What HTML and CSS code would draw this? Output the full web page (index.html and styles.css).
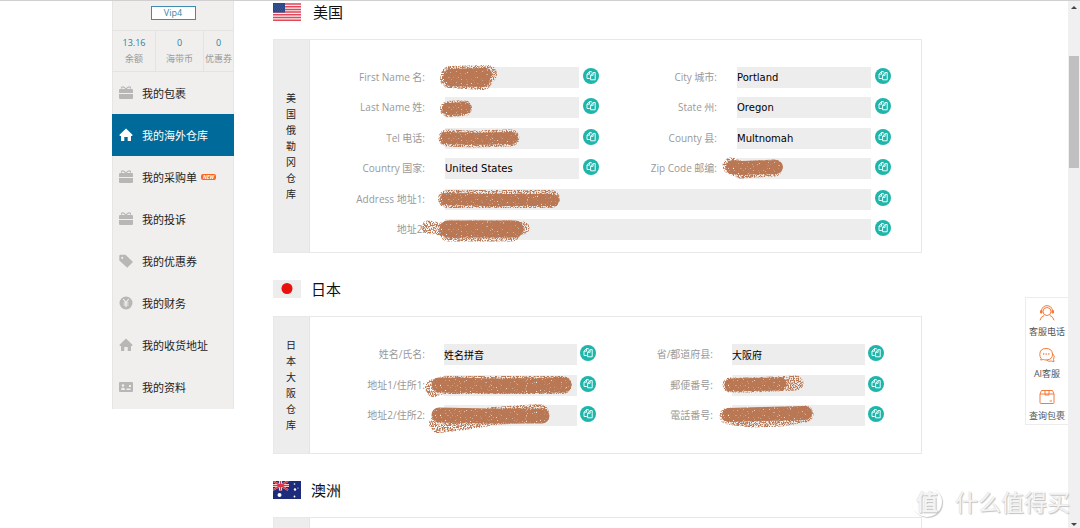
FILE: index.html
```html
<!DOCTYPE html>
<html lang="zh-CN">
<head>
<meta charset="utf-8">
<title>我的海外仓库</title>
<link rel="stylesheet" href="styles.css">
</head>
<body>
<svg class="defs" aria-hidden="true">
  <defs>
    <filter id="loose" filterUnits="userSpaceOnUse" x="-50" y="-20" width="280" height="60">
      <feTurbulence type="fractalNoise" baseFrequency="0.8" numOctaves="2" seed="4"/>
      <feColorMatrix values="0 0 0 0 0  0 0 0 0 0  0 0 0 0 0  6 0 0 0 -2.5"/>
      <feComposite in="SourceGraphic" operator="in"/>
    </filter>
    <filter id="dense" filterUnits="userSpaceOnUse" x="-50" y="-20" width="280" height="60">
      <feTurbulence type="fractalNoise" baseFrequency="0.8" numOctaves="2" seed="9"/>
      <feColorMatrix values="0 0 0 0 0  0 0 0 0 0  0 0 0 0 0  6 0 0 0 -1.3"/>
      <feComposite in="SourceGraphic" operator="in"/>
    </filter>
    <symbol id="copy" viewBox="0 0 16 16">
      <path d="M8.300 4.500V3.500H6.600L4 6.200v4.300h2.800M6.600 3.500v2.700H4M12.200 4.500v7.300H7.600V7.300l2.500-2.800zM10.100 4.500v2.800H7.600" fill="none" stroke="#e9fffc" stroke-width="1" stroke-linejoin="round"/>
    </symbol>
    <symbol id="gift" viewBox="0 0 14 14">
      <path d="M1 3h12q1 0 1 1v3H0V4q0-1 1-1zM0 8h14v4q0 1-1 1H1q-1 0-1-1z"/>
      <path d="M7 3.200C5 0 2 .2 2.600 2.600M7 3.200C9 0 12 .2 11.400 2.600" fill="none" stroke="currentColor" stroke-width="1.200"/>
    </symbol>
    <symbol id="home" viewBox="0 0 14 14">
      <path d="M7 .5 13.700 7l-.7.9h-1V13H8.700V9H5.300v4H2V7.900H1L.3 7z"/>
    </symbol>
    <symbol id="tag" viewBox="0 0 14 14">
      <path fill-rule="evenodd" d="M.3 2q0-1.200 1.200-1.200h5L14 8 8.200 13.700.3 6.500zM3.200 2.700a1.100 1.100 0 1 0 .01 0z"/>
    </symbol>
    <symbol id="coin" viewBox="0 0 14 14">
      <circle cx="7" cy="7" r="6.500"/>
      <path d="M4.300 3 7 6.500 9.700 3M7 6.500V11M4.500 7h5M4.500 9h5" fill="none" stroke="#f0efed" stroke-width="1.200"/>
    </symbol>
    <symbol id="card" viewBox="0 0 14 14">
      <rect y="2" width="14" height="10" rx="1"/>
      <path d="M2 10q0-2.500 2-2.500T6 10zM2.700 5.500a1.300 1.300 0 1 1 2.600 0 1.300 1.300 0 0 1-2.600 0M7.500 8.500h4V10h-4zM10 5h2v2h-2z" fill="#f0efed"/>
    </symbol>
  </defs>
</svg>
<div class="shell">
  <div class="page">
    <aside class="sidebar">
      <div class="level"><a class="vip" href="#">Vip4</a></div>
      <div class="stats">
        <div class="stat"><b>13.16</b><span>余额</span></div>
        <div class="stat wide"><b>0</b><span>海带币</span></div>
        <div class="stat"><b>0</b><span>优惠券</span></div>
      </div>
      <nav class="menu">
        <a href="#"><svg><use href="#gift"/></svg>我的包裹</a>
        <a href="#" class="active"><svg><use href="#home"/></svg>我的海外仓库</a>
        <a href="#"><svg><use href="#gift"/></svg>我的采购单<em class="new">NEW</em></a>
        <a href="#"><svg><use href="#gift"/></svg>我的投诉</a>
        <a href="#"><svg><use href="#tag"/></svg>我的优惠券</a>
        <a href="#"><svg><use href="#coin"/></svg>我的财务</a>
        <a href="#"><svg><use href="#home"/></svg>我的收货地址</a>
        <a href="#"><svg><use href="#card"/></svg>我的资料</a>
      </nav>
    </aside>
    <main class="main">
      <h2 class="country first">
        <svg class="flag" viewBox="0 0 28 18"><path fill="#fbeef0" d="M0 0h28v18H0z"/><path d="M0 1h28M0 3.700h28M0 6.400h28M0 9.100h28M0 11.800h28M0 14.500h28M0 17.200h28" stroke="#e0485c" stroke-width="1.500"/><path fill="#2a4788" d="M0 0h12v9.500H0z"/><path d="M1 2h10M2 4h9M1 6h10M2 8h9" stroke="#5670a8" stroke-width=".6" stroke-dasharray="1 1"/></svg>
        美国
      </h2>
      <section class="panel">
        <h3 class="warehouse">美国俄勒冈仓库</h3>
        <form class="form us">
          <div class="field"><label for="u1">First Name 名:</label><div class="control"><input id="u1" readonly><svg class="scribble"><path class="loose" d="M5 8 43 7" stroke-width="18"/><path class="loose" d="M4 12 38 14" stroke-width="18"/><path class="dense" d="M5 8 41 7 38 14 5 13z" stroke-width="12"/></svg></div><button type="button" aria-label="复制"><svg><use href="#copy"/></svg></button></div>
          <div class="field"><label for="u2">City 城市:</label><div class="control"><input id="u2" readonly value="Portland"></div><button type="button" aria-label="复制"><svg><use href="#copy"/></svg></button></div>
          <div class="field"><label for="u3">Last Name 姓:</label><div class="control"><input id="u3" readonly><svg class="scribble"><path class="loose" d="M3 12 19 11" stroke-width="16"/><path class="dense" d="M3 12 20 11" stroke-width="12"/></svg></div><button type="button" aria-label="复制"><svg><use href="#copy"/></svg></button></div>
          <div class="field"><label for="u4">State 州:</label><div class="control"><input id="u4" readonly value="Oregon"></div><button type="button" aria-label="复制"><svg><use href="#copy"/></svg></button></div>
          <div class="field"><label for="u5">Tel 电话:</label><div class="control"><input id="u5" readonly><svg class="scribble"><path class="loose" d="M2 10 28 11 66 10" stroke-width="17"/><path class="dense" d="M1 10 28 11 67 10" stroke-width="12"/></svg></div><button type="button" aria-label="复制"><svg><use href="#copy"/></svg></button></div>
          <div class="field"><label for="u6">County 县:</label><div class="control"><input id="u6" readonly value="Multnomah"></div><button type="button" aria-label="复制"><svg><use href="#copy"/></svg></button></div>
          <div class="field"><label for="u7">Country 国家:</label><div class="control"><input id="u7" readonly value="United States"></div><button type="button" aria-label="复制"><svg><use href="#copy"/></svg></button></div>
          <div class="field"><label for="u8">Zip Code 邮编:</label><div class="control"><input id="u8" readonly><svg class="scribble"><path class="loose" d="M-6 8 4 12 37 10" stroke-width="17"/><path class="dense" d="M-4 9 4 10 39 9" stroke-width="14"/></svg></div><button type="button" aria-label="复制"><svg><use href="#copy"/></svg></button></div>
          <div class="field full"><label for="u9">Address 地址1:</label><div class="control"><input id="u9" readonly><svg class="scribble"><path class="loose" d="M2 10 80 10 106 10" stroke-width="18"/><path class="dense" d="M1 10 40 11 108 11" stroke-width="12"/></svg></div><button type="button" aria-label="复制"><svg><use href="#copy"/></svg></button></div>
          <div class="field full"><label for="u10">地址2:</label><div class="control"><input id="u10" readonly><svg class="scribble"><path class="loose" d="M-17 8 0 11 78 9" stroke-width="13"/><path class="loose" d="M4 12H66" stroke-width="21"/><path class="dense" d="M3 10H70" stroke-width="17"/></svg></div><button type="button" aria-label="复制"><svg><use href="#copy"/></svg></button></div>
        </form>
      </section>

      <h2 class="country">
        <svg class="flag" viewBox="0 0 28 18"><path fill="#ededed" d="M0 0h28v18H0z"/><circle cx="14" cy="8.500" r="5.500" fill="#e8120c"/></svg>
        日本
      </h2>
      <section class="panel">
        <h3 class="warehouse">日本大阪仓库</h3>
        <form class="form jp">
          <div class="field"><label for="j1">姓名/氏名:</label><div class="control"><input id="j1" readonly value="姓名拼音"></div><button type="button" aria-label="复制"><svg><use href="#copy"/></svg></button></div>
          <div class="field"><label for="j2">省/都道府县:</label><div class="control"><input id="j2" readonly value="大阪府"></div><button type="button" aria-label="复制"><svg><use href="#copy"/></svg></button></div>
          <div class="field"><label for="j3">地址1/住所1:</label><div class="control"><input id="j3" readonly><svg class="scribble"><path class="loose" d="M-10 13 0 10 119 10" stroke-width="18"/><path class="dense" d="M-5 10 60 11 120 10" stroke-width="15"/></svg></div><button type="button" aria-label="复制"><svg><use href="#copy"/></svg></button></div>
          <div class="field"><label for="j4">郵便番号:</label><div class="control"><input id="j4" readonly><svg class="scribble"><path class="loose" d="M-2 10 18 10 64 8" stroke-width="15"/><path class="dense" d="M-1 10 48 9" stroke-width="13"/></svg></div><button type="button" aria-label="复制"><svg><use href="#copy"/></svg></button></div>
          <div class="field"><label for="j5">地址2/住所2:</label><div class="control"><input id="j5" readonly><svg class="scribble"><path class="loose" d="M-6 19 20 16 50 11 96 8" stroke-width="18"/><path class="dense" d="M-5 10 45 11 98 11" stroke-width="15"/></svg></div><button type="button" aria-label="复制"><svg><use href="#copy"/></svg></button></div>
          <div class="field"><label for="j6">電話番号:</label><div class="control"><input id="j6" readonly><svg class="scribble"><path class="loose" d="M-4 11 20 14 50 13 73 9" stroke-width="17"/><path class="dense" d="M-3 10 30 9 73 8" stroke-width="14"/></svg></div><button type="button" aria-label="复制"><svg><use href="#copy"/></svg></button></div>
        </form>
      </section>

      <h2 class="country">
        <svg class="flag" viewBox="0 0 28 18"><path fill="#1c2c7a" d="M0 0h28v18H0z"/><path d="M0 0l15 9M15 0 0 9" stroke="#fff" stroke-width="1.800"/><path d="M7.500 0v9.500M0 4.500h16" stroke="#fff" stroke-width="3.200"/><path d="M7.500 0v9.500M0 4.500h16M0 0l15 9M15 0 0 9" stroke="#dc3545" stroke-width="1.500"/><g fill="#fff"><circle cx="6.500" cy="14" r="2"/><circle cx="21.500" cy="3" r=".8"/><circle cx="22" cy="8.500" r="1.200"/><circle cx="25" cy="7" r=".6"/><circle cx="21.500" cy="15.500" r=".9"/></g></svg>
        澳洲
      </h2>
      <section class="panel last">
        <h3 class="warehouse"></h3>
        <div class="form"></div>
      </section>
    </main>
  </div>

  <div class="scrollbar" aria-hidden="true">
    <i class="arrow up"></i>
    <i class="thumb"></i>
    <i class="arrow"></i>
  </div>

  <nav class="support">
    <a href="#"><svg viewBox="0 0 16 16"><circle cx="8" cy="6.500" r="4"/><path d="M2.500 8V5.500Q3.500.7 8 .7t5.500 4.800V8M1.500 5.500v2.500h1.500V5.500zM13 5.500v2.500h1.500V5.500zM1 15.300q1-4 4-4.800M15 15.300q-1-4-4-4.800"/></svg>客服电话</a>
    <a href="#"><svg viewBox="0 0 16 16"><path d="M2.200 11.500Q.8 10 .8 7.500.8 1.500 7 1.500t6.500 5.500-6 6q-2 0-3-.5L1.700 13zM13.500 6.500q3 2.500 1 6l.5 2.300-2.500-.8q-3 1-5-1"/><path d="M4 7h1.200M6.600 7h1.200M9.200 7h1.200" stroke-width="1.500"/></svg>AI客服</a>
    <a href="#"><svg viewBox="0 0 16 16"><path d="M1 5h14v8.500q0 1-1 1H2q-1 0-1-1zM1 5l1.500-3.500h11L15 5M6 1.500V6h4V1.500M10.500 12H13"/></svg>查询包裹</a>
  </nav>
  <div class="watermark"><span class="seal">值</span><span>什么值得买</span></div>
</div>
</body>
</html>
```
FILE: styles.css
```css
* {
  box-sizing: border-box;
}

body {
  margin: 0;
  font-family: "Open Sans", "Noto Sans CJK SC", sans-serif;
  font-size: 10px;
  color: #222;
  background: #fff;
}

a {
  color: inherit;
  text-decoration: none;
}

.defs {
  position: absolute;
  width: 0;
  height: 0;
}

.shell {
  position: relative;
  display: flex;
  height: 100vh;
  overflow: hidden;
  border-top: 1px solid #d0d0d0;
}

.page {
  flex: 1;
  display: flex;
  align-items: flex-start;
  gap: 39px;
  max-width: 844px;
  margin: 0 auto;
}

/* Sidebar */
.sidebar {
  flex: none;
  width: 122px;
  padding-bottom: 1px;
  background: #f0efed;
  border: solid #e6e5e3;
  border-width: 0 1px;
}

.level {
  display: flex;
  justify-content: center;
  padding: 5px 0 10px;
}

.vip {
  width: 45px;
  border: 1px solid #3c8cb0;
  background: #fff;
  color: #3b86a8;
  font-size: 9px;
  line-height: 12px;
  text-align: center;
}

.stats {
  display: flex;
  border: solid #e4e3e1;
  border-width: 1px 0;
}

.stat {
  flex: 1 1 42px;
  display: flex;
  flex-direction: column;
  padding: 4px 0;
  color: #999;
  font-size: 9px;
  line-height: 16px;
  text-align: center;
  white-space: nowrap;
}

.stat:last-child {
  flex-basis: 29px;
}

.stat.wide {
  flex-basis: 49px;
  border: solid #e4e3e1;
  border-width: 0 1px;
}

.stat b {
  color: #2e7fa6;
  font-weight: 400;
}

.menu a {
  display: flex;
  align-items: center;
  height: 42px;
  padding-left: 6px;
  font-size: 11px;
}

.menu svg {
  width: 14px;
  height: 14px;
  margin-right: 9px;
  color: #b8b7b6;
  fill: currentColor;
}

.menu .active {
  margin: 0 -1px;
  padding-left: 7px;
  background: #006b9a;
  color: #fff;
}

.menu .active svg {
  color: #fff;
}

.new {
  margin-left: 4px;
  padding: 0 2px;
  border-radius: 2px;
  background: #ff6420;
  color: #fff;
  font-size: 5px;
  font-weight: 700;
  line-height: 6px;
}

/* Warehouses */
.main {
  flex: 1;
  padding-right: 34px;
}

.country {
  display: flex;
  gap: 10px;
  margin: 0;
  padding: 27px 0 18px;
  color: #111;
  font-size: 15px;
  font-weight: 400;
  line-height: 18px;
}

.country.first {
  gap: 12px;
  padding-top: 2px;
}

.flag {
  width: 28px;
  height: 18px;
}

.panel {
  display: flex;
  border: 1px solid #e8e8e8;
}

.panel.last {
  min-height: 214px;
}

.warehouse {
  display: flex;
  align-items: center;
  justify-content: center;
  flex: none;
  width: 36px;
  margin: 0;
  padding: 0 12px;
  border-right: 1px solid #e4e4e4;
  background: #ededed;
  font-size: 10px;
  font-weight: 400;
  line-height: 16px;
}

.form {
  flex: 1;
  display: grid;
  align-content: space-between;
}

.us {
  grid-template-columns: 289fr 292fr;
  min-height: 212px;
  padding: 27px 30px 12px 0;
}

.jp {
  grid-template-columns: 286fr 288fr;
  min-height: 136px;
  padding: 27px 37px 27px 0;
}

.field {
  display: flex;
  gap: 4px;
}

.jp .field {
  gap: 3px;
}

.full {
  grid-column: span 2;
}

.field label {
  flex: 1;
  padding-right: 16px;
  color: #999;
  line-height: 21px;
  text-align: right;
}

.control {
  position: relative;
  width: 134px;
  height: 21px;
}

.jp .control {
  width: 133px;
}

.full label {
  flex: 0 0 131px;
}

.full .control {
  flex: 1;
}

.control input {
  display: block;
  width: 100%;
  height: 21px;
  padding: 0;
  border: 0;
  outline: 0;
  background: #ededed;
  color: #000;
  font-family: "DejaVu Sans", "Noto Sans CJK SC", sans-serif;
  font-size: 10px;
}

.scribble {
  position: absolute;
  top: 0;
  left: 0;
  width: 100%;
  height: 100%;
  overflow: visible;
  pointer-events: none;
  fill: none;
  stroke: #b97853;
  stroke-linecap: round;
  stroke-linejoin: round;
}

.loose {
  filter: url(#loose);
}

.dense {
  filter: url(#dense);
}

.field button {
  width: 16px;
  height: 16px;
  margin-top: 1px;
  padding: 0;
  border: 0;
  border-radius: 50%;
  background: #1fb5ab;
}

.field button svg {
  display: block;
  width: 16px;
  height: 16px;
}

/* Scrollbar */
.scrollbar {
  display: flex;
  flex-direction: column;
  align-items: center;
  flex: none;
  width: 12px;
  padding: 5px 0 2px;
  background: #f0f0f0;
}

.thumb {
  width: 10px;
  height: 112px;
  margin: 47px 0 auto;
  background: #c0c0c0;
}

.arrow {
  border: solid transparent;
  border-width: 3px 3px 0;
  border-top-color: #444;
}

.arrow.up {
  border-width: 0 3px 3px;
  border-bottom-color: #444;
}

/* Floating support bar */
.support {
  position: absolute;
  top: 296px;
  right: 12px;
  width: 43px;
  border: 1px solid #ececec;
  border-right: 0;
  background: #fff;
}

.support a {
  display: flex;
  flex-direction: column;
  align-items: center;
  gap: 5px;
  height: 42px;
  padding-top: 7px;
  color: #555;
  font-size: 9px;
  line-height: 12px;
  white-space: nowrap;
}

.support svg {
  width: 16px;
  height: 16px;
  flex: none;
  fill: none;
  stroke: #f47b3c;
  stroke-width: 1;
}

.watermark {
  position: absolute;
  right: 10px;
  bottom: 10px;
  display: flex;
  align-items: center;
  gap: 9px;
  color: #f4f4f4;
  font-size: 23px;
  line-height: 32px;
  text-shadow: 1px 1px 1px #c0c0c0, 0 0 1px #ccc;
  white-space: nowrap;
  pointer-events: none;
}

.seal {
  width: 30px;
  height: 30px;
  margin-right: 4px;
  border-radius: 50%;
  box-shadow: 1px 1px 1px #c4c4c4;
  font-size: 22px;
  font-weight: 700;
  line-height: 28px;
  text-align: center;
}
```
